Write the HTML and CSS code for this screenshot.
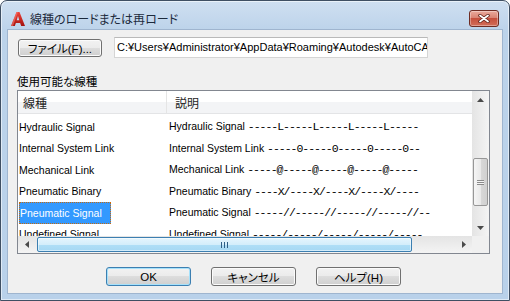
FILE: index.html
```html
<!DOCTYPE html>
<html>

<head>
    <title>線種のロードまたは再ロード</title>
    <link rel="stylesheet" href="styles.css">
</head>

<body>
    <div class="window">
        <div class="titlebar">
            <svg class="app-icon" width="16" height="16" viewBox="0 0 16 16">
                <defs>
                    <linearGradient id="ared" x1="0" y1="0" x2="0" y2="1">
                        <stop offset="0" stop-color="#f0443a"/>
                        <stop offset="1" stop-color="#a3120e"/>
                    </linearGradient>
                </defs>
                <path d="M6.5 1 L9.5 1 L15 15 L11.2 15 L10.1 12 L5.9 12 L4.8 15 L1 15 Z M8 5 L6.7 9.2 L9.3 9.2 Z" fill="url(#ared)" fill-rule="evenodd"/>
                <path d="M6.5 1 L8 1 L3 15 L1 15 Z" fill="#f77a70" opacity="0.6"/>
            </svg>
            <span class="title">線種のロードまたは再ロード</span>
            <div class="close-btn">
                <svg width="12" height="9" viewBox="0 0 12 9">
                    <path d="M2 1.5 L10 7.5 M10 1.5 L2 7.5" stroke="#5b1d15" stroke-width="3.4" stroke-linecap="round"/>
                    <path d="M2 1.5 L10 7.5 M10 1.5 L2 7.5" stroke="#ffffff" stroke-width="1.8" stroke-linecap="round"/>
                </svg>
            </div>
        </div>

        <div class="client">
            <div class="file-row">
                <button class="btn file-btn">ファイル(F)...</button>
                <div class="path-field">C:¥Users¥Administrator¥AppData¥Roaming¥Autodesk¥AutoCAD 2014¥R19.1¥jpn¥Support¥acadiso.lin</div>
            </div>

            <div class="group-label">使用可能な線種</div>

            <div class="listview">
                <div class="lv-content">
                    <div class="lv-header">
                        <div class="hcol name">線種</div>
                        <div class="hcol desc">説明</div>
                    </div>
                    <div class="lv-rows">
                        <div class="row">
                            <span class="c-name">Hydraulic Signal</span>
                            <span class="c-desc">Hydraulic Signal <span class="pat">-----L-----L-----L-----L-----</span></span>
                        </div>
                        <div class="row">
                            <span class="c-name">Internal System Link</span>
                            <span class="c-desc">Internal System Link <span class="pat">-----0-----0-----0-----0--</span></span>
                        </div>
                        <div class="row">
                            <span class="c-name">Mechanical Link</span>
                            <span class="c-desc">Mechanical Link <span class="pat">-----@-----@-----@-----@-----</span></span>
                        </div>
                        <div class="row">
                            <span class="c-name">Pneumatic Binary</span>
                            <span class="c-desc">Pneumatic Binary <span class="pat">----X/----X/----X/----X/----</span></span>
                        </div>
                        <div class="row">
                            <span class="c-name"><span class="sel">Pneumatic Signal</span></span>
                            <span class="c-desc">Pneumatic Signal <span class="pat">-----//-----//-----//-----//--</span></span>
                        </div>
                        <div class="row">
                            <span class="c-name">Undefined Signal</span>
                            <span class="c-desc">Undefined Signal <span class="pat">-----/-----/-----/-----/-----</span></span>
                        </div>
                    </div>
                </div>

                <div class="vscroll">
                    <div class="sb-btn">
                        <svg width="7" height="4" viewBox="0 0 7 4"><path d="M3.5 0 L7 4 L0 4 Z" fill="#4a4a4a"/></svg>
                    </div>
                    <div class="v-track">
                        <div class="v-thumb">
                            <span class="grip-h"></span>
                        </div>
                    </div>
                    <div class="sb-btn">
                        <svg width="7" height="4" viewBox="0 0 7 4"><path d="M0 0 L7 0 L3.5 4 Z" fill="#4a4a4a"/></svg>
                    </div>
                </div>

                <div class="hscroll">
                    <div class="sb-btn">
                        <svg width="4" height="7" viewBox="0 0 4 7"><path d="M4 0 L4 7 L0 3.5 Z" fill="#4a4a4a"/></svg>
                    </div>
                    <div class="h-track">
                        <div class="h-thumb">
                            <span class="grip-v"></span>
                        </div>
                    </div>
                    <div class="sb-btn">
                        <svg width="4" height="7" viewBox="0 0 4 7"><path d="M0 0 L4 3.5 L0 7 Z" fill="#4a4a4a"/></svg>
                    </div>
                </div>

                <div class="corner"></div>
            </div>

            <div class="dialog-buttons">
                <button class="btn default">OK</button>
                <button class="btn">キャンセル</button>
                <button class="btn">ヘルプ(H)</button>
            </div>
        </div>
    </div>
</body>

</html>
```

FILE: styles.css
```css
body {
    margin: 0;
    background-color: #fff;
    font-family: "Liberation Sans", "Noto Sans CJK JP", sans-serif;
    font-feature-settings: "palt";
    color: #000;
}

.window {
    box-sizing: border-box;
    width: 510px;
    height: 301px;
    display: flex;
    flex-direction: column;
    padding: 0 7px 7px;
    border: 1px solid #3f4f63;
    border-radius: 7px 7px 0 0;
    background: linear-gradient(#cfdff1, #bcd3ea 30px, #b9d1ea);
    box-shadow: inset 0 0 0 1px rgba(255, 255, 255, 0.55);
}

/* title bar */

.titlebar {
    height: 29px;
    box-sizing: border-box;
    padding: 6px 3px 0 2px;
    display: flex;
    align-items: center;
}

.app-icon {
    flex: none;
}

.title {
    margin-left: 4px;
    font-size: 12px;
    color: #1c2a3c;
}

.close-btn {
    margin-left: auto;
    width: 30px;
    height: 17px;
    box-sizing: border-box;
    border: 1px solid #6e2c23;
    border-radius: 3px;
    background: linear-gradient(#eaaa9c, #d98474 45%, #c5503d 50%, #d26d58);
    box-shadow: inset 0 0 0 1px rgba(255, 255, 255, 0.35);
    display: flex;
    align-items: center;
    justify-content: center;
}

/* client area */

.client {
    flex: 1;
    background-color: #f0f0f0;
    box-shadow: 0 0 0 1px #9fb5cf;
    display: flex;
    flex-direction: column;
}

.btn {
    box-sizing: border-box;
    padding: 0;
    border: 1px solid #707070;
    border-radius: 3px;
    background: linear-gradient(#f2f2f2, #ebebeb 50%, #dddddd 50%, #cfcfcf);
    box-shadow: inset 0 0 0 1px #fbfbfb;
    font-family: "Liberation Sans", "Noto Sans CJK JP", sans-serif;
    font-feature-settings: "palt";
    font-size: 11.5px;
    color: #000;
}

.btn.default {
    border-color: #3c7fb1;
    box-shadow: inset 0 0 0 1px #a6e1fb;
}

.file-row {
    display: flex;
    align-items: center;
    gap: 12px;
    padding: 7px 0 0 10px;
}

.file-btn {
    width: 84px;
    height: 18px;
}

.path-field {
    width: 314px;
    height: 21px;
    box-sizing: border-box;
    border: 1px solid #d5d5d5;
    border-top-color: #b9b9b9;
    background-color: #fff;
    padding-left: 2px;
    font-size: 11px;
    line-height: 19px;
    white-space: nowrap;
    overflow: hidden;
}

.group-label {
    margin: 17px 0 0 9px;
    height: 14px;
    font-size: 11.5px;
    line-height: 14px;
}

/* list view */

.listview {
    margin: 1px 0 0 9px;
    width: 473px;
    height: 164px;
    box-sizing: border-box;
    border: 1px solid #828790;
    background-color: #fff;
    display: grid;
    grid-template-columns: 1fr 17px;
    grid-template-rows: 1fr 17px;
}

.lv-content {
    grid-row: 1;
    grid-column: 1;
    overflow: hidden;
    min-height: 0;
}

.lv-header {
    height: 23px;
    box-sizing: border-box;
    display: flex;
    border-bottom: 1px solid #e3e4e6;
    background: linear-gradient(#ffffff 50%, #f3f4f6 50%);
    font-size: 12px;
    color: #1e1e1e;
}

.hcol {
    display: flex;
    align-items: center;
}

.hcol.name {
    width: 149px;
    box-sizing: border-box;
    padding-left: 5px;
    border-right: 1px solid #e5e5e5;
}

.hcol.desc {
    padding-left: 8px;
}

.lv-rows {
    padding-top: 2px;
    font-size: 10.5px;
}

.row {
    display: flex;
    align-items: center;
    height: 21.5px;
    white-space: nowrap;
}

.c-name {
    flex: none;
    width: 151px;
    box-sizing: border-box;
    padding-left: 1px;
}

.sel {
    display: inline-block;
    width: 92px;
    height: 22px;
    box-sizing: border-box;
    padding-left: 1px;
    line-height: 22px;
    background-color: #3399ff;
    color: #fff;
    outline: 1px dotted #c46a10;
    outline-offset: -1px;
}

.pat {
    font-family: "Liberation Mono", monospace;
    font-size: 11.5px;
    letter-spacing: -1.02px;
}

/* scroll bars */

.sb-btn {
    flex: none;
    width: 17px;
    height: 17px;
    display: flex;
    align-items: center;
    justify-content: center;
}

.vscroll {
    grid-row: 1;
    grid-column: 2;
    display: flex;
    flex-direction: column;
    background: linear-gradient(90deg, #e4e4e4, #f4f4f4);
}

.v-track {
    flex: 1;
}

.v-thumb {
    margin: 50px 1px 0;
    height: 48px;
    box-sizing: border-box;
    border: 1px solid #979797;
    border-radius: 2px;
    background: linear-gradient(90deg, #f5f5f5, #e9e9e9 50%, #d8d8d8 50%, #d0d0d0);
    display: flex;
    align-items: center;
    justify-content: center;
}

.grip-h {
    width: 7px;
    height: 5px;
    background: repeating-linear-gradient(#8a8a8a 0 1px, #f4f4f4 1px 2px);
}

.hscroll {
    grid-row: 2;
    grid-column: 1;
    display: flex;
    background: linear-gradient(#e4e4e4, #f4f4f4);
}

.h-track {
    flex: 1;
    display: flex;
    align-items: center;
}

.h-thumb {
    margin-left: 2px;
    width: 375px;
    height: 15px;
    box-sizing: border-box;
    border: 1px solid #3c7fb1;
    border-radius: 2px;
    background: linear-gradient(#e5f5fd, #d4eefb 50%, #b0dff7 50%, #a6d8f3);
    box-shadow: inset 0 0 0 1px rgba(255, 255, 255, 0.5);
    display: flex;
    align-items: center;
    justify-content: center;
}

.grip-v {
    width: 7px;
    height: 6px;
    background: repeating-linear-gradient(90deg, #2f5f86 0 1px, transparent 1px 3px);
}

.corner {
    grid-row: 2;
    grid-column: 2;
    background-color: #f0f0f0;
}

/* bottom buttons */

.dialog-buttons {
    display: flex;
    justify-content: center;
    gap: 20px;
    margin-top: 13px;
    padding-right: 3px;
}

.dialog-buttons .btn {
    width: 85px;
    height: 19px;
}
```
